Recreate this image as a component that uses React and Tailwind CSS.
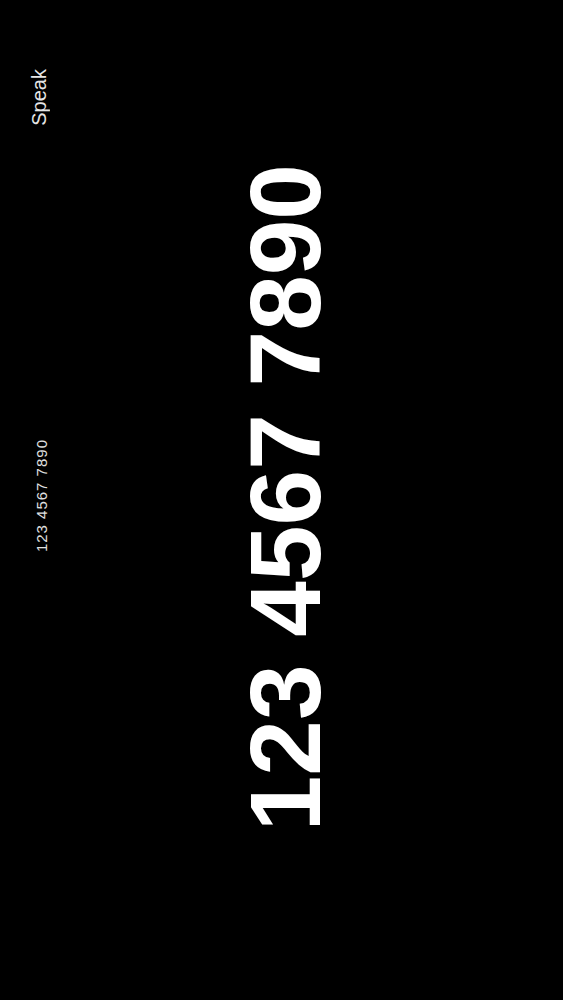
import React from 'react';

const sideways = '[writing-mode:vertical-rl] rotate-180 whitespace-nowrap leading-none';

export default function App() {
  const number = '123 4567 7890';

  return (
    <div className="flex h-[1000px] w-full overflow-hidden bg-black font-['Liberation_Sans',Arial,sans-serif]">
      <div className="flex w-[49px] flex-col items-end">
        <div className={`${sideways} mt-[69px] text-[20px] text-[#e6e6e6]`}>
          Speak
        </div>
        <div className={`${sideways} mt-[313px] text-[15px] tracking-[1px] text-[#e0e0e0]`}>
          {number}
        </div>
      </div>

      <div className="ml-[186px] flex items-center">
        <div className={`${sideways} -mt-[4px] text-[100px] font-bold text-white`}>
          {number}
        </div>
      </div>
    </div>
  );
}
